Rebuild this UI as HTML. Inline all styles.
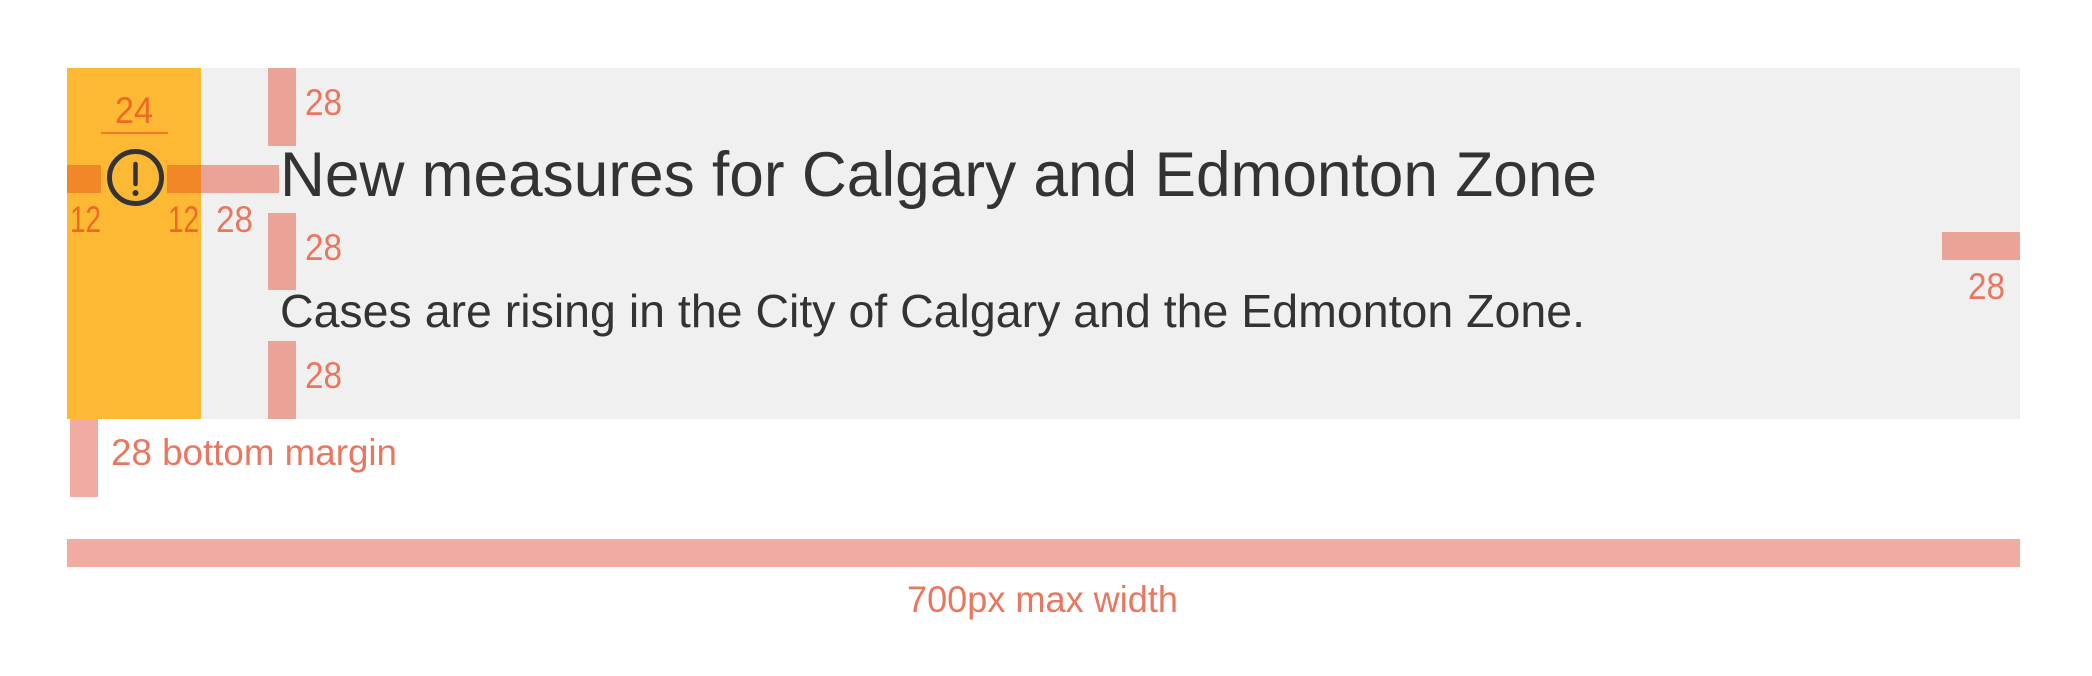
<!DOCTYPE html>
<html><head><meta charset="utf-8"><style>
html,body{margin:0;padding:0;background:#fff;width:2092px;height:676px;overflow:hidden}
svg{display:block}
text{font-family:"Liberation Sans",sans-serif}
</style></head><body>
<svg width="2092" height="676" viewBox="0 0 2092 676" xmlns="http://www.w3.org/2000/svg">
<rect x="67" y="68" width="1953" height="351" fill="#f0f0f0"/>
<rect x="67" y="68" width="134" height="351" fill="#feb934"/>
<rect x="67" y="165" width="34" height="28" fill="#f18726"/>
<rect x="167" y="165" width="34" height="28" fill="#f18726"/>
<rect x="201" y="165" width="78" height="28" fill="#eba397"/>
<rect x="268" y="68" width="28" height="78" fill="#eba397"/>
<rect x="268" y="213" width="28" height="77" fill="#eba397"/>
<rect x="268" y="341" width="28" height="78" fill="#eba397"/>
<rect x="1942" y="232" width="78" height="28" fill="#eba397"/>
<rect x="70" y="419" width="28" height="78" fill="#f2aba0"/>
<rect x="67" y="539" width="1953" height="28" fill="#f2aba0"/>
<rect x="101" y="132" width="67" height="2" fill="#f07a25"/>
<circle cx="135.5" cy="177.5" r="26" fill="none" stroke="#333" stroke-width="5"/>
<line x1="135.5" y1="164" x2="135.5" y2="184" stroke="#333" stroke-width="4.5" stroke-linecap="round"/>
<circle cx="135.5" cy="193" r="3" fill="#333"/>
<g fill="#ee6a24" font-size="37">
<text x="115" y="123" textLength="38" lengthAdjust="spacingAndGlyphs">24</text>
<text x="70" y="232" textLength="31" lengthAdjust="spacingAndGlyphs">12</text>
<text x="168" y="232" textLength="31" lengthAdjust="spacingAndGlyphs">12</text>
</g>
<g fill="#e9775f" font-size="37">
<text x="216" y="232" textLength="37" lengthAdjust="spacingAndGlyphs">28</text>
<text x="305" y="115" textLength="37" lengthAdjust="spacingAndGlyphs">28</text>
<text x="305" y="260" textLength="37" lengthAdjust="spacingAndGlyphs">28</text>
<text x="305" y="388" textLength="37" lengthAdjust="spacingAndGlyphs">28</text>
<text x="1968" y="299" textLength="37" lengthAdjust="spacingAndGlyphs">28</text>
<text x="111" y="465" textLength="286" lengthAdjust="spacingAndGlyphs">28 bottom margin</text>
<text x="907" y="612" textLength="271" lengthAdjust="spacingAndGlyphs">700px max width</text>
</g>
<text x="280" y="196" font-size="63" fill="#333" textLength="1317" lengthAdjust="spacingAndGlyphs">New measures for Calgary and Edmonton Zone</text>
<text x="280" y="327" font-size="46" fill="#333" textLength="1305" lengthAdjust="spacingAndGlyphs">Cases are rising in the City of Calgary and the Edmonton Zone.</text>
</svg>
</body></html>
